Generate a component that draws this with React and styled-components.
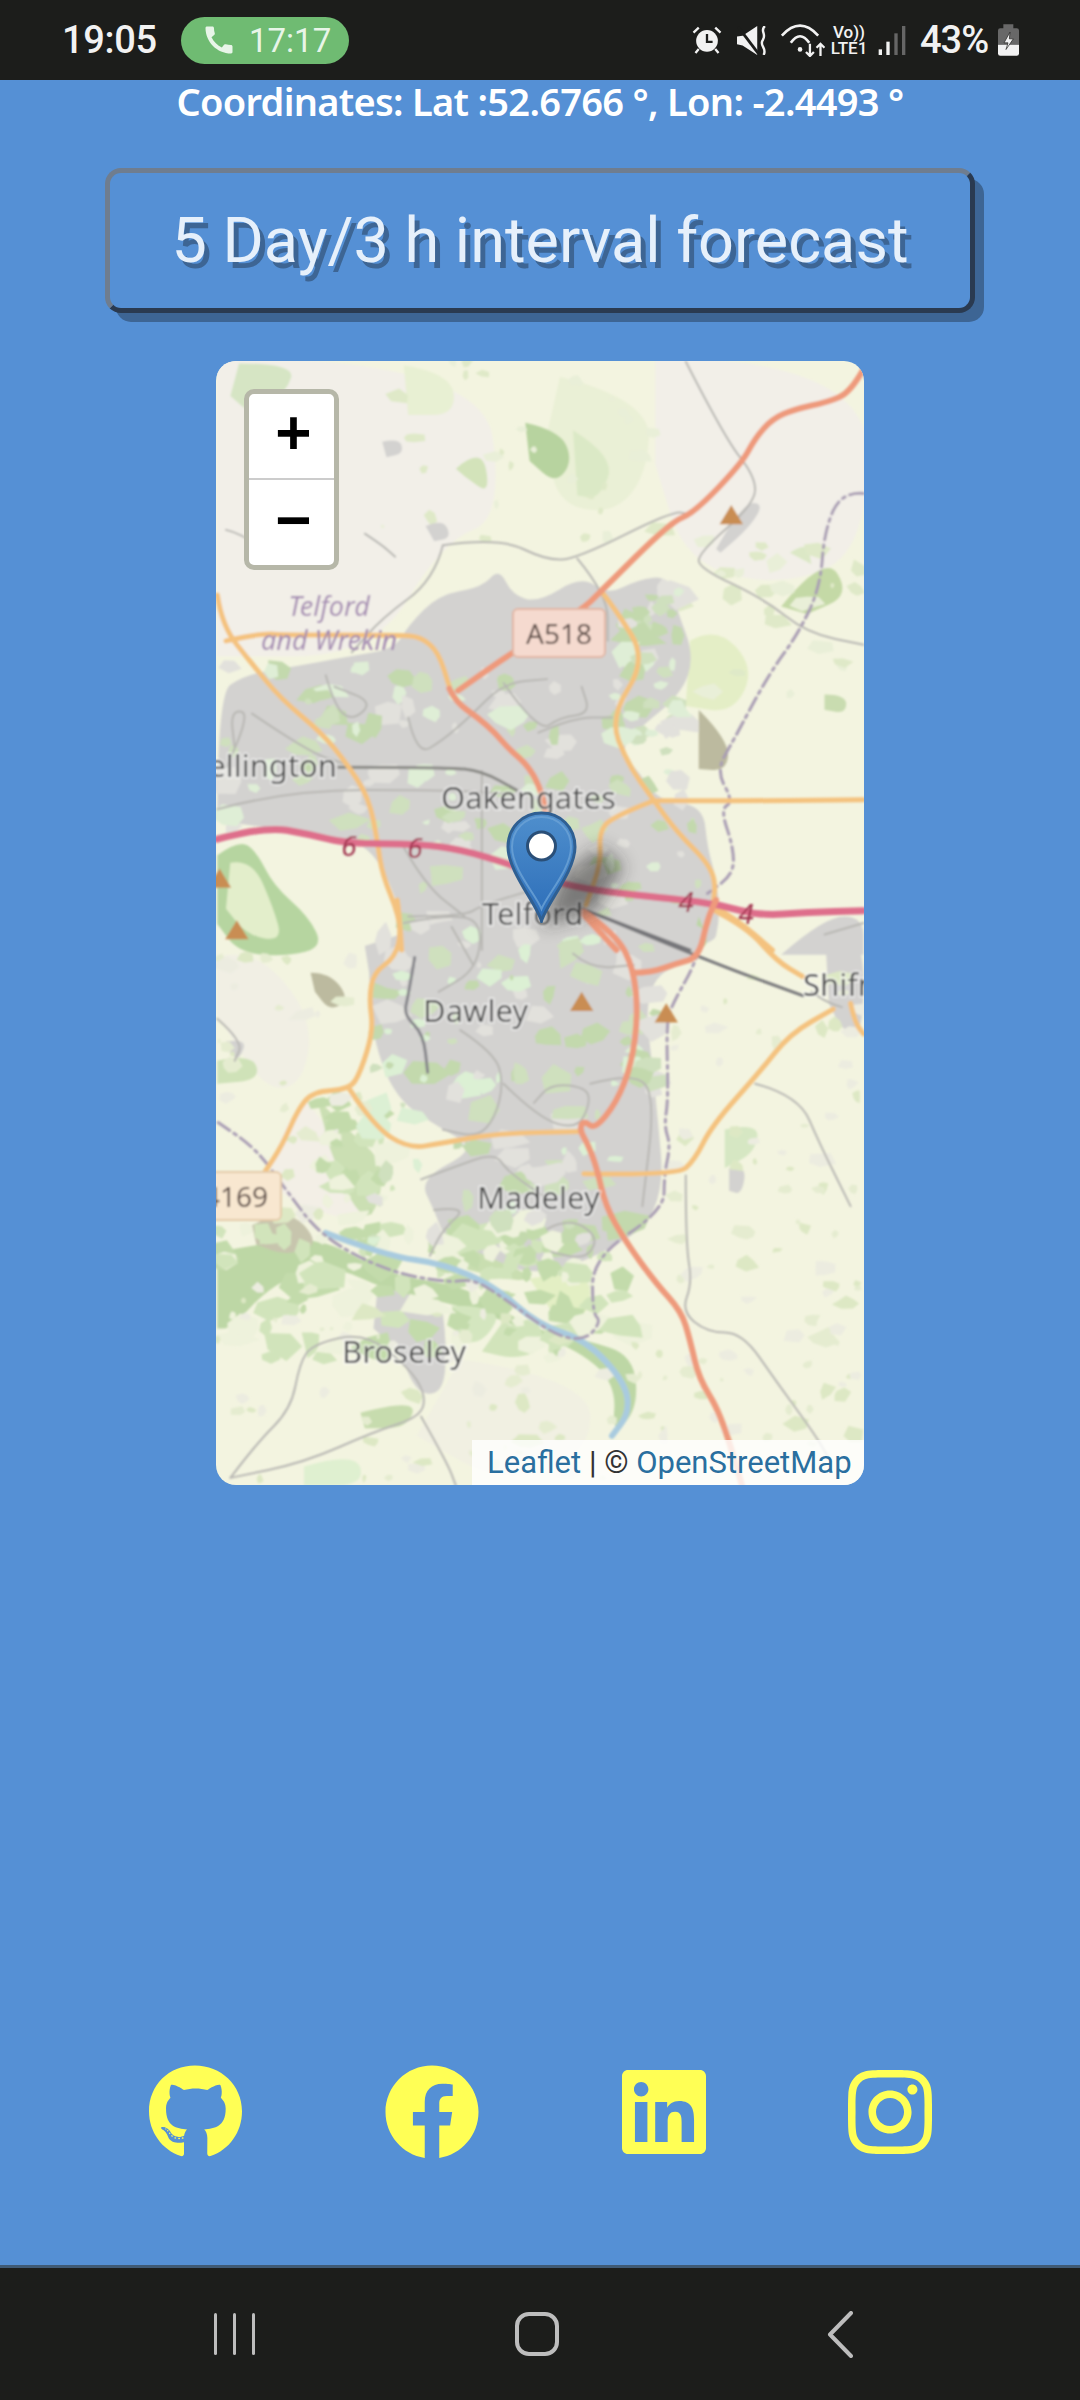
import React from 'react';
import styled, { createGlobalStyle } from "styled-components";
import { MdCall } from "react-icons/md";
import { FaGithub, FaFacebook, FaLinkedin, FaInstagram } from "react-icons/fa";

// map shapes are written in the coordinates of two crops of the map
const UPPER = "translate(-16,-11) scale(.4337,.3827)";
const LOWER = "translate(-16,539) scale(.4337,.3827)";

// turns "x,y x,y x,y" into a smooth path through the midpoints
function smooth(points, closed) {
    const p = points.trim().split(/\s+/).map((s) => s.split(",").map(Number));
    let d = `M${p[0][0]} ${p[0][1]}`;
    for (let i = 1; i < p.length - 1; i++) {
        const mx = (p[i][0] + p[i + 1][0]) / 2;
        const my = (p[i][1] + p[i + 1][1]) / 2;
        d += ` Q${p[i][0]} ${p[i][1]} ${mx} ${my}`;
    }
    const last = p[p.length - 1];
    d += ` L${last[0]} ${last[1]}`;
    return closed ? d + " Z" : d;
}

// small irregular patches, seeded so that every run draws the same map
function patches(seed, count, x, y, w, h, size) {
    let s = seed;
    const next = () => {
        s = (s * 16807) % 2147483647;
        return s / 2147483647;
    };
    return Array.from({ length: count }, () => {
        const cx = x + next() * w;
        const cy = y + next() * h;
        const r = size * (0.4 + next() * 1.3);
        const corners = 5 + Math.floor(next() * 3);
        const tilt = next() * 3.14;
        const stretch = 0.5 + next() * 1.3;
        let pts = "";
        for (let i = 0; i < corners; i++) {
            const a = tilt + (i / corners) * 6.283;
            const k = r * (0.6 + next() * 0.7);
            pts += `${(cx + Math.cos(a) * k * stretch).toFixed(1)},${(cy + Math.sin(a) * k).toFixed(1)} `;
        }
        return pts;
    });
}

const landUpper = [
    ["#f2efe8", "40,20 650,20 700,440 560,500 400,800 40,800"],
    ["#f2efe8", "1050,20 1540,20 1540,520 1350,620 1120,560 1050,300"],
    ["#eaf0d6", "830,70 1040,130 1030,330 950,430 820,400 800,220"],
    ["#e8f0d3", "470,40 580,60 590,170 480,170"],
    ["#e4eec6", "1130,760 1190,720 1280,830 1230,950 1120,930"],
    ["#d6e5c4", "90,35 220,35 200,110 120,170 70,120"],
    ["#b7d39f", "750,190 830,210 860,290 820,350 760,290"],
    ["#dbe9c6", "860,210 960,280 920,390 870,380"],
    ["#c4d9a6", "1340,670 1440,530 1500,640 1400,690"],
    ["#d3e3ba", "590,310 650,250 670,380 610,330"],
    ["#dce8c6", "1360,530 1400,500 1410,560"],
    ["#c9dcb0", "1440,900 1490,900 1490,950 1440,940"],
];

const landLower = [
    ["#f3efe6", "240,520 340,650 400,850 220,800 150,720 200,590"],
    ["#f1efe4", "40,150 120,120 260,300 240,480 150,500 40,300"],
    ["#f1f0e2", "600,1200 900,1250 900,1450 700,1530 500,1400"],
];

const urbanUpper = [
    "40,1230 40,900 100,850 200,830 350,800 450,780 480,720 550,640 650,620 690,570 720,640 780,660 880,590 940,640 1010,600 1080,590 1100,680 1140,800 1110,900 1000,1000 970,1050 1010,1100 1060,1180 1160,1190 1170,1300 1190,1380 1200,1480 1180,1580 460,1580 470,1480 400,1300 300,1270",
    "1340,1580 1440,1480 1530,1480 1530,1580",
    "420,240 460,230 470,270 430,280",
    "520,460 560,440 580,490 540,500",
    "1190,520 1250,400 1300,400 1270,460 1200,530",
];

const urbanLower = [
    "380,120 460,90 600,40 1180,40 1150,150 1020,210 1050,500 1075,820 905,940 760,985 570,900 540,810 505,730 640,650 560,600 450,520 395,350 390,190",
    "1440,60 1530,60 1530,360 1480,340 1450,270",
    "410,1010 550,990 570,1170 560,1290 500,1290 460,1180 400,1120",
    "60,370 110,360 90,420 70,400",
    "1220,700 1260,690 1250,770 1220,760",
];

const forestLower = [
    ["#bdd7a5", "40,920 130,900 280,880 430,980 620,1010 760,1120 890,1150 1000,1190 1010,1330 950,1400 960,1270 880,1180 700,1100 600,1060 430,1020 300,950 170,1000 70,1120 40,1120"],
    ["#c9deb0", "540,870 700,950 760,980 740,1000 560,950"],
    ["#e3efc4", "760,990 900,960 900,1090 820,1090"],
    ["#cbdfb3", "270,520 340,600 430,690 400,840 350,800 300,650"],
    ["#d4e6bf", "580,1060 700,1060 660,1150 600,1160"],
    ["#c7dcae", "370,1340 500,1300 480,1380 380,1380"],
    ["#dff0d0", "240,1480 360,1440 380,1530 240,1530"],
    ["#d2e4bb", "700,1100 800,1170 730,1200 650,1180"],
    ["#cfe2b8", "40,420 120,400 140,470 40,480"],
    ["#d6e7c3", "1210,600 1290,580 1280,660 1210,700"],
    ["#bcba9f", "255,190 300,190 345,260 300,290 265,240"],
    ["#c7c5ad", "120,850 200,800 280,900 200,930 130,900"],
];

const forestUpper = [
    ["#b6d5a0", "40,1320 90,1280 130,1310 170,1400 250,1480 285,1560 200,1585 90,1575 40,1500"],
    ["#e3eecb", "70,1340 120,1330 170,1460 190,1545 110,1530 60,1460"],
    ["#bcba9f", "1150,940 1220,1020 1215,1100 1150,1095"],
    ["#bcd6a4", "1130,1568 1180,1568 1150,1480"],
];

const secondaryUpper = [
    "40,640 50,720 120,820 185,910 280,1000 335,1075 390,1170 410,1290 420,1370 460,1480 465,1568",
    "60,760 140,740 200,745 460,745 510,750 550,790 575,880",
    "925,630 960,680 1030,810 945,960 985,1080 1045,1175 1100,1260 1180,1350 1190,1420 1170,1500",
    "1045,1178 1300,1178 1530,1175",
    "1045,1178 950,1220 920,1260 925,1340 890,1450",
    "1180,1450 1240,1490 1320,1568",
];

const secondaryLower = [
    "455,0 465,80 450,150 400,190 390,260 400,340 370,450 345,495 260,500 225,550 190,640 150,710",
    "345,495 400,590 480,650 560,635 680,610 880,605",
    "885,715 1100,720 1140,680 1180,590 1290,450 1360,350 1460,285",
    "1190,30 1260,70 1330,160 1390,200",
    "1500,270 1510,320 1530,350",
];

const trunkUpper = [
    "1530,50 1500,110 1450,135 1370,155 1320,180 1280,230 1250,295 1140,425 1085,450 925,630 880,680 720,790 595,890",
    "575,885 590,920 640,960 680,1000 710,1040 760,1090 790,1160 800,1240",
    "880,1470 960,1568",
];

const trunkLower = [
    "885,30 960,90 1000,180 1010,300 995,430 960,530 910,600 885,575 875,600 895,640 915,700 935,800 980,890 1050,1000 1110,1075 1130,1150 1150,1250 1200,1340 1250,1530",
    "1000,190 1040,190 1100,165 1150,150 1170,50 1190,0",
];

const minorUpper = [
    "560,510 690,490 800,550 870,545 1090,420 1130,430",
    "560,510 540,600 420,700 350,790",
    "870,545 940,640 940,760",
    "1120,30 1210,230 1280,330 1280,400 1150,530 1150,570 1300,650 1400,740 1530,770",
    "40,1200 200,1150 560,1150 720,1160",
    "650,1100 650,1568",
    "380,480 420,510 450,540",
    "60,470 100,480 180,560",
    "290,850 310,930 350,970 400,920 310,880",
    "480,960 500,1060 560,1020 620,960 700,870 800,860",
    "700,870 780,1000 830,960 900,950 880,880",
    "60,1090 120,950 70,940 80,1040",
    "480,1480 610,1480 650,1450 800,1400",
    "780,1000 860,960 950,960",
    "120,950 250,1050 330,1080",
    "470,1300 520,1400 610,1480",
];

const minorLower = [
    "470,60 560,40 650,50 640,180 550,240",
    "580,70 630,170",
    "860,140 900,180 1000,170",
    "600,340 680,400 700,480 680,570 640,620 560,600",
    "700,480 780,570 870,600 900,530 890,490 810,480 770,530",
    "900,480 1000,450 1050,510 1020,800",
    "510,730 580,700 680,660 710,710 800,780",
    "540,810 620,800 560,860 530,930",
    "800,860 850,830 920,880 890,940 810,920",
    "1120,720 1120,900 1135,1000 1110,1075 1170,1130 1250,1130 1330,1260 1420,1400 1450,1460",
    "70,1510 130,1420 210,1330 230,1210 260,1160 380,1130 480,1220 520,1290 510,1350 400,1390 240,1470 70,1510",
    "510,1350 570,1470 590,1530",
    "40,310 100,370 80,420",
    "1480,280 1450,270 1410,240",
    "1440,90 1530,60",
    "1280,480 1380,510 1430,640 1500,800",
];

const boundaryUpper = "1530,375 1480,370 1440,470 1430,620 1380,740 1310,850 1230,1020 1190,1100 1230,1180 1200,1200 1230,1300 1230,1370 1170,1420";
const boundaryLower = [
    "1170,50 1150,150 1090,270 1075,320 1080,520 1070,590 1085,640 1070,720 1070,810 905,935 905,1080 925,1100 890,1150 820,1140 700,1040 630,990 570,1000 430,970 280,880 200,760 130,650 40,580",
];

const peaks = [
    [UPPER, 1225, 430],
    [UPPER, 45, 1380],
    [UPPER, 85, 1515],
    [LOWER, 880, 265],
    [LOWER, 1075, 295],
];

const urbanPatches = [
    ...patches(11, 90, 60, 820, 1060, 460, 20),
    ...patches(29, 40, 480, 1200, 680, 360, 20),
    ...patches(37, 40, 960, 620, 160, 400, 22),
];
const urbanPatchesLower = patches(53, 120, 400, 60, 660, 860, 22);
const fieldPatches = [
    ...patches(97, 90, 1060, 200, 470, 1300, 14),
    ...patches(101, 60, 40, 1000, 1000, 520, 14),
    ...patches(113, 35, 40, 130, 340, 700, 14),
];
const forestPatches = [
    ...patches(131, 90, 40, 860, 960, 340, 24),
    ...patches(137, 40, 280, 520, 180, 380, 18),
    ...patches(139, 40, 540, 840, 300, 160, 20),
];
const topPatches = [
    ...patches(151, 30, 420, 30, 640, 500, 14),
    ...patches(157, 30, 1050, 500, 480, 400, 16),
];

function MapDrawing() {
    return (
        <MapSvg viewBox="0 0 648 1124">
            <rect width="648" height="1124" fill="#f3f4e0" />
            <g filter="url(#soft)">
                <g transform={UPPER}>
                    {landUpper.map(([fill, pts]) => <path key={pts} d={smooth(pts, true)} fill={fill} />)}
                    {topPatches.map((pts, i) => <polygon key={i} points={pts} fill={i % 2 ? "#dfe9c8" : "#e9efd8"} />)}
                    {urbanUpper.map((pts) => <path key={pts} d={smooth(pts, true)} fill="#d3d2d0" />)}
                    {forestUpper.map(([fill, pts]) => <path key={pts} d={smooth(pts, true)} fill={fill} />)}
                    {urbanPatches.map((pts, i) => <polygon key={i} points={pts} fill={["#cfe0be", "#e2e1dc", "#c3d9ad", "#dfeed6"][i % 4]} />)}
                </g>
                <g transform={LOWER}>
                    {landLower.map(([fill, pts]) => <path key={pts} d={smooth(pts, true)} fill={fill} />)}
                    {urbanLower.map((pts) => <path key={pts} d={smooth(pts, true)} fill="#d3d2d0" />)}
                    {forestLower.map(([fill, pts]) => <path key={pts} d={smooth(pts, true)} fill={fill} />)}
                    {forestPatches.map((pts, i) => <polygon key={i} points={pts} fill={["#c3dbab", "#eef2dc", "#d1e4bb"][i % 3]} />)}
                    {urbanPatchesLower.map((pts, i) => <polygon key={i} points={pts} fill={["#cfe0be", "#e2e1dc", "#c3d9ad", "#dcf0d4"][i % 4]} />)}
                    {fieldPatches.map((pts, i) => <polygon key={i} points={pts} fill={["#dde8c4", "#ecece0", "#e5ecd0"][i % 3]} />)}
                </g>

                <g transform={UPPER} fill="none" strokeLinejoin="round" strokeLinecap="round">
                    {minorUpper.map((pts) => <Road key={pts} d={smooth(pts)} stroke="#b8b7b3" $width={2} />)}
                    <Road d={smooth(boundaryUpper)} stroke="#a99db4" $width={3} strokeDasharray="14 5 3 5" />
                    <Road d={smooth("320,1090 570,1090 650,1100 730,1150")} stroke="#8a8a86" $width={3} />
                    <Road d={smooth("880,1460 1130,1568")} stroke="#77777a" $width={3} />
                    {secondaryUpper.map((pts) => <Road key={pts} d={smooth(pts)} stroke="#f4c27f" $width={5} />)}
                    {trunkUpper.map((pts) => <Road key={pts} d={smooth(pts)} stroke="#ee9a7c" $width={6} />)}
                    <Road d={smooth("40,1278 150,1245 250,1265 340,1290 500,1290 600,1305 720,1345 850,1405 1100,1435 1200,1450 1290,1478 1400,1470 1530,1465")} stroke="#de6e8b" $width={7} />
                </g>
                <g transform={LOWER} fill="none" strokeLinejoin="round" strokeLinecap="round">
                    {minorLower.map((pts) => <Road key={pts} d={smooth(pts)} stroke="#b8b7b3" $width={2} />)}
                    <Road d={smooth("290,870 430,930 560,950 680,1010 780,1110 890,1150 980,1260 990,1340 950,1400")} stroke="#a9cbdf" $width={6} />
                    {boundaryLower.map((pts) => <Road key={pts} d={smooth(pts)} stroke="#a99db4" $width={3} strokeDasharray="14 5 3 5" />)}
                    <Road d={smooth("920,40 1150,150 1390,250")} stroke="#77777a" $width={3} />
                    <Road d={smooth("495,150 480,250 470,300 515,350 525,450")} stroke="#85858a" $width={3} />
                    {secondaryLower.map((pts) => <Road key={pts} d={smooth(pts)} stroke="#f4c27f" $width={5} />)}
                    {trunkLower.map((pts) => <Road key={pts} d={smooth(pts)} stroke="#ee9a7c" $width={6} />)}
                </g>

                {peaks.map(([t, x, y]) => (
                    <g key={`${x}${y}`} transform={t}>
                        <polygon points={`${x},${y - 25} ${x + 27},${y + 25} ${x - 27},${y + 25}`} fill="#c98d52" />
                    </g>
                ))}

                <rect x="297" y="248" width="92" height="48" rx="5" fill="#f5dacf" stroke="#e2b5a2" strokeWidth="2" />
                <rect x="-10" y="811" width="75" height="48" rx="5" fill="#f8e7d0" stroke="#e4cba8" strokeWidth="2" />

                <ShieldText x="343" y="283" textAnchor="middle">A518</ShieldText>
                <ShieldText x="52" y="846" textAnchor="end">B4169</ShieldText>

                <MotorwayNumber x="133" y="495">6</MotorwayNumber>
                <MotorwayNumber x="199" y="497">6</MotorwayNumber>
                <MotorwayNumber x="470" y="551">4</MotorwayNumber>
                <MotorwayNumber x="530" y="563">4</MotorwayNumber>

                <DistrictLabel x="113" y="255" textAnchor="middle">Telford</DistrictLabel>
                <DistrictLabel x="113" y="289" textAnchor="middle">and Wrekin</DistrictLabel>

                <PlaceLabel x="121" y="416" textAnchor="end">Wellington</PlaceLabel>
                <PlaceLabel x="225" y="448">Oakengates</PlaceLabel>
                <PlaceLabel x="266" y="564">Telford</PlaceLabel>
                <PlaceLabel x="207" y="661">Dawley</PlaceLabel>
                <PlaceLabel x="587" y="635">Shifnal</PlaceLabel>
                <PlaceLabel x="261" y="848">Madeley</PlaceLabel>
                <PlaceLabel x="126" y="1002">Broseley</PlaceLabel>
            </g>
            <defs>
                <filter id="soft">
                    <feGaussianBlur stdDeviation="1" />
                </filter>
                <filter id="shade" x="-50%" y="-50%" width="200%" height="200%">
                    <feGaussianBlur stdDeviation="9" />
                </filter>
            </defs>
            <path d="M325 566 L345 515 L385 485 L408 505 L380 550 Z" fill="#222" opacity="0.5" filter="url(#shade)" />
        </MapSvg>
    );
}

function MapPin() {
    return (
        <Pin viewBox="0 0 71 112">
            <defs>
                <linearGradient id="pinFill" x1="0" y1="0" x2="0" y2="1">
                    <stop offset="0" stopColor="#4f8fcd" />
                    <stop offset="1" stopColor="#2c6db8" />
                </linearGradient>
            </defs>
            <path d="M35.5 110 C30 92 2 60 2 36 C2 16 17 2 35.5 2 C54 2 69 16 69 36 C69 60 41 92 35.5 110 Z" fill="url(#pinFill)" stroke="#2f5f92" strokeWidth="3" />
            <path d="M35.5 98 C30 84 6 58 6 36 C6 19 19 6 35.5 6 C52 6 65 19 65 36 C65 58 41 84 35.5 98 Z" fill="none" stroke="#6ba2d6" strokeWidth="2" opacity="0.8" />
            <circle cx="35.5" cy="35" r="14" fill="#fff" stroke="#2a4f78" strokeWidth="3" />
        </Pin>
    );
}

function App() {
    return (
        <>
            <GlobalStyle />
            <Page>
                <StatusBar>
                    <Clock>19:05</Clock>
                    <CallPill>
                        <MdCall size={36} />
                        <span>17:17</span>
                    </CallPill>
                    <StatusIcons>
                        <StatusIcon viewBox="0 0 90 85" $w={30} $h={28} $gap={15}>
                            <circle cx="45" cy="45" r="33" fill="#f2f2f2" />
                            <path d="M45 24 V48 H62" fill="none" stroke="#1c1d1b" strokeWidth="7" />
                            <path d="M4 20 L20 5 M70 5 L86 20 M20 70 L10 82 M70 70 L80 82" stroke="#f2f2f2" strokeWidth="7" />
                        </StatusIcon>
                        <StatusIcon viewBox="0 0 86 83" $w={30} $h={29} $gap={13}>
                            <path d="M0 30 L16 28 L58 0 V83 L16 56 L0 52 Z" fill="#f2f2f2" />
                            <path d="M3 2 L62 80" stroke="#1c1d1b" strokeWidth="8" />
                            <path d="M80 0 C64 14 86 22 74 40 C62 56 88 64 76 83" fill="none" stroke="#f2f2f2" strokeWidth="7" />
                        </StatusIcon>
                        <StatusIcon viewBox="0 0 135 100" $w={45} $h={33} $gap={5}>
                            <path d="M5 35 Q60 -25 115 35 M32 57 Q60 17 88 57" fill="none" stroke="#f2f2f2" strokeWidth="8" />
                            <circle cx="60" cy="77" r="7" fill="#f2f2f2" />
                            <path d="M90 60 V97 M78 85 L90 97 L102 85 M122 97 V60 M110 72 L122 60 L134 72" fill="none" stroke="#f2f2f2" strokeWidth="7" />
                        </StatusIcon>
                        <VoLte>
                            <span>Vo))</span>
                            <span>LTE1</span>
                        </VoLte>
                        <StatusIcon viewBox="0 0 80 87" $w={28} $h={29} $gap={14}>
                            <rect x="0" y="70" width="10" height="17" fill="#f2f2f2" />
                            <rect x="23" y="47" width="10" height="40" fill="#f2f2f2" />
                            <rect x="47" y="22" width="10" height="65" fill="#666" />
                            <rect x="70" y="0" width="10" height="87" fill="#666" />
                        </StatusIcon>
                        <Percent>43%</Percent>
                        <StatusIcon viewBox="0 0 63 95" $w={21} $h={32} $gap={7}>
                            <path d="M16 0 H46 V12 H56 Q63 12 63 19 V62 H0 V19 Q0 12 7 12 H16 Z" fill="#686868" />
                            <path d="M0 62 H63 V88 Q63 95 56 95 H7 Q0 95 0 88 Z" fill="#f2f2f2" />
                            <path d="M36 24 L18 56 H30 L24 76 L46 44 H34 Z" fill="#f2f2f2" stroke="#1c1d1b" strokeWidth="2" />
                        </StatusIcon>
                    </StatusIcons>
                </StatusBar>

                <Main>
                    <Coordinates>Coordinates: Lat :52.6766 °, Lon: -2.4493 °</Coordinates>
                    <ForecastButton>5 Day/3 h interval forecast</ForecastButton>
                    <MapCard>
                        <MapDrawing />
                        <ZoomControl>
                            <ZoomButton>+</ZoomButton>
                            <ZoomButton>−</ZoomButton>
                        </ZoomControl>
                        <MapPin />
                        <Attribution>
                            <a href="#null">Leaflet</a> | © <a href="#null">OpenStreetMap</a>
                        </Attribution>
                    </MapCard>
                    <Socials>
                        <FaGithub size={96} />
                        <FaFacebook size={96} />
                        <FaLinkedin size={96} />
                        <FaInstagram size={96} />
                    </Socials>
                </Main>

                <NavBar>
                    <NavSlot>
                        <Recents>
                            <i />
                            <i />
                            <i />
                        </Recents>
                    </NavSlot>
                    <NavSlot>
                        <Home />
                    </NavSlot>
                    <NavSlot>
                        <svg width="26" height="47" viewBox="0 0 26 47">
                            <path d="M24 2 L3 23.5 L24 45" fill="none" stroke="#bdbdbd" strokeWidth="4" strokeLinecap="round" strokeLinejoin="round" />
                        </svg>
                    </NavSlot>
                </NavBar>
            </Page>
        </>
    );
}


const GlobalStyle = createGlobalStyle`
	body {
		margin: 0;
		font-family: Roboto, "Liberation Sans", sans-serif;
	}
`;

const Page = styled.div`
	display: flex;
	flex-direction: column;
	width: 1080px;
	height: 2400px;
	overflow: hidden;
`;

const StatusBar = styled.header`
	display: flex;
	align-items: center;
	height: 80px;
	padding: 0 61px 0 62px;
	box-sizing: border-box;
	background: #1c1d1b;
	color: #f2f2f2;
`;

const Clock = styled.span`
	width: 96px;
	font-size: 38px;
	font-weight: 500;
	letter-spacing: -0.3px;
`;

const CallPill = styled.div`
	display: flex;
	align-items: center;
	gap: 12px;
	width: 168px;
	height: 47px;
	margin-left: 23px;
	padding-left: 20px;
	box-sizing: border-box;
	border-radius: 24px;
	background: #6fbb72;
	color: #e8f5e8;
	font-size: 33px;
`;

const StatusIcons = styled.div`
	display: flex;
	align-items: center;
	margin-left: auto;
`;

const StatusIcon = styled.svg`
	width: ${(props) => props.$w}px;
	height: ${(props) => props.$h}px;
	margin-right: ${(props) => props.$gap}px;
	flex: none;

	&:last-child {
		margin-right: 0;
	}
`;

const VoLte = styled.div`
	display: flex;
	flex-direction: column;
	align-items: center;
	width: 38px;
	margin-right: 10px;
	font-size: 17px;
	line-height: 16px;
	font-weight: 500;
`;

const Percent = styled.span`
	width: 71px;
	margin-right: 7px;
	font-size: 38px;
	font-weight: 500;
	letter-spacing: -1px;
`;

const Main = styled.main`
	flex: 1;
	display: flex;
	flex-direction: column;
	align-items: center;
	background: #5590d5;
`;

const Coordinates = styled.h1`
	margin: 0;
	font-family: "Noto Sans", sans-serif;
	font-size: 38px;
	line-height: 42px;
	font-weight: 600;
	letter-spacing: -0.7px;
	white-space: nowrap;
	color: #fff;
`;

const ForecastButton = styled.button`
	width: 870px;
	height: 145px;
	margin-top: 46px;
	padding: 0;
	box-sizing: border-box;
	border: 5px solid;
	border-color: #6f7d8f #2a3a50 #2a3a50 #6f7d8f;
	border-radius: 16px;
	background: #5590d5;
	box-shadow: 10px 10px 0 -1px #3d6594;
	font-family: Roboto, sans-serif;
	font-size: 63px;
	color: #e6f0fb;
	text-shadow: 5px 6px 0 #3d6594;
`;

const MapCard = styled.section`
	position: relative;
	width: 648px;
	height: 1124px;
	margin-top: 48px;
	border-radius: 20px;
	overflow: hidden;
`;

const MapSvg = styled.svg`
	display: block;
	width: 648px;
	height: 1124px;
`;

const Road = styled.path`
	vector-effect: non-scaling-stroke;
	stroke-width: ${(props) => props.$width}px;
`;

const ShieldText = styled.text`
	font-family: "Noto Sans", sans-serif;
	font-size: 28px;
	fill: #60504a;
`;

const MotorwayNumber = styled.text`
	font-family: "Noto Sans", sans-serif;
	font-size: 28px;
	font-style: italic;
	fill: #a0324e;
	text-anchor: middle;
`;

const DistrictLabel = styled.text`
	font-family: "Noto Sans", sans-serif;
	font-size: 27px;
	font-style: italic;
	fill: #a58cb2;
`;

const PlaceLabel = styled.text`
	font-family: "Noto Sans", sans-serif;
	font-size: 31px;
	fill: #4e4e4e;
	stroke: rgba(255, 255, 255, 0.6);
	stroke-width: 3px;
	paint-order: stroke;
`;

const ZoomControl = styled.div`
	position: absolute;
	left: 28px;
	top: 28px;
	width: 95px;
	height: 181px;
	box-sizing: border-box;
	border: 5px solid #b6b7a8;
	border-radius: 10px;
	background: #fff;
	display: grid;
	grid-template-rows: 1fr 1fr;
`;

const ZoomButton = styled.div`
	display: flex;
	align-items: center;
	justify-content: center;
	padding: 0 0 7px 4px;
	font-family: "DejaVu Sans Mono", monospace;
	font-size: 58px;
	font-weight: 700;
	line-height: 1;
	color: #000;

	&:first-child {
		border-bottom: 2px solid #ccc;
	}
`;

const Pin = styled.svg`
	position: absolute;
	left: 290px;
	top: 450px;
	width: 71px;
	height: 112px;
`;

const Attribution = styled.div`
	position: absolute;
	right: 0;
	bottom: 0;
	width: 392px;
	height: 45px;
	box-sizing: border-box;
	padding-left: 15px;
	background: rgba(255, 255, 255, 0.8);
	font-size: 31px;
	line-height: 45px;
	color: #333;
	white-space: nowrap;

	a {
		color: #2a6f9f;
		text-decoration: none;
	}
`;

const Socials = styled.div`
	display: flex;
	justify-content: center;
	gap: 142px;
	margin-top: auto;
	padding-bottom: 105px;
	color: #ffff55;

	svg:nth-child(1) {
		width: 93px;
	}

	svg:nth-child(3),
	svg:nth-child(4) {
		width: 84px;
	}
`;

const NavBar = styled.nav`
	display: grid;
	grid-template-columns: repeat(3, 303px);
	justify-content: center;
	align-items: center;
	height: 135px;
	padding-right: 6px;
	box-sizing: border-box;
	border-top: 3px solid #3f5a75;
	background: #1c1d1b;
`;

const NavSlot = styled.div`
	display: flex;
	justify-content: center;
	align-items: center;
`;

const Recents = styled.div`
	display: flex;
	gap: 16px;

	i {
		width: 3px;
		height: 42px;
		border-radius: 2px;
		background: #bdbdbd;
	}
`;

const Home = styled.div`
	width: 44px;
	height: 44px;
	box-sizing: border-box;
	border: 4px solid #bdbdbd;
	border-radius: 14px;
`;

export default App;
